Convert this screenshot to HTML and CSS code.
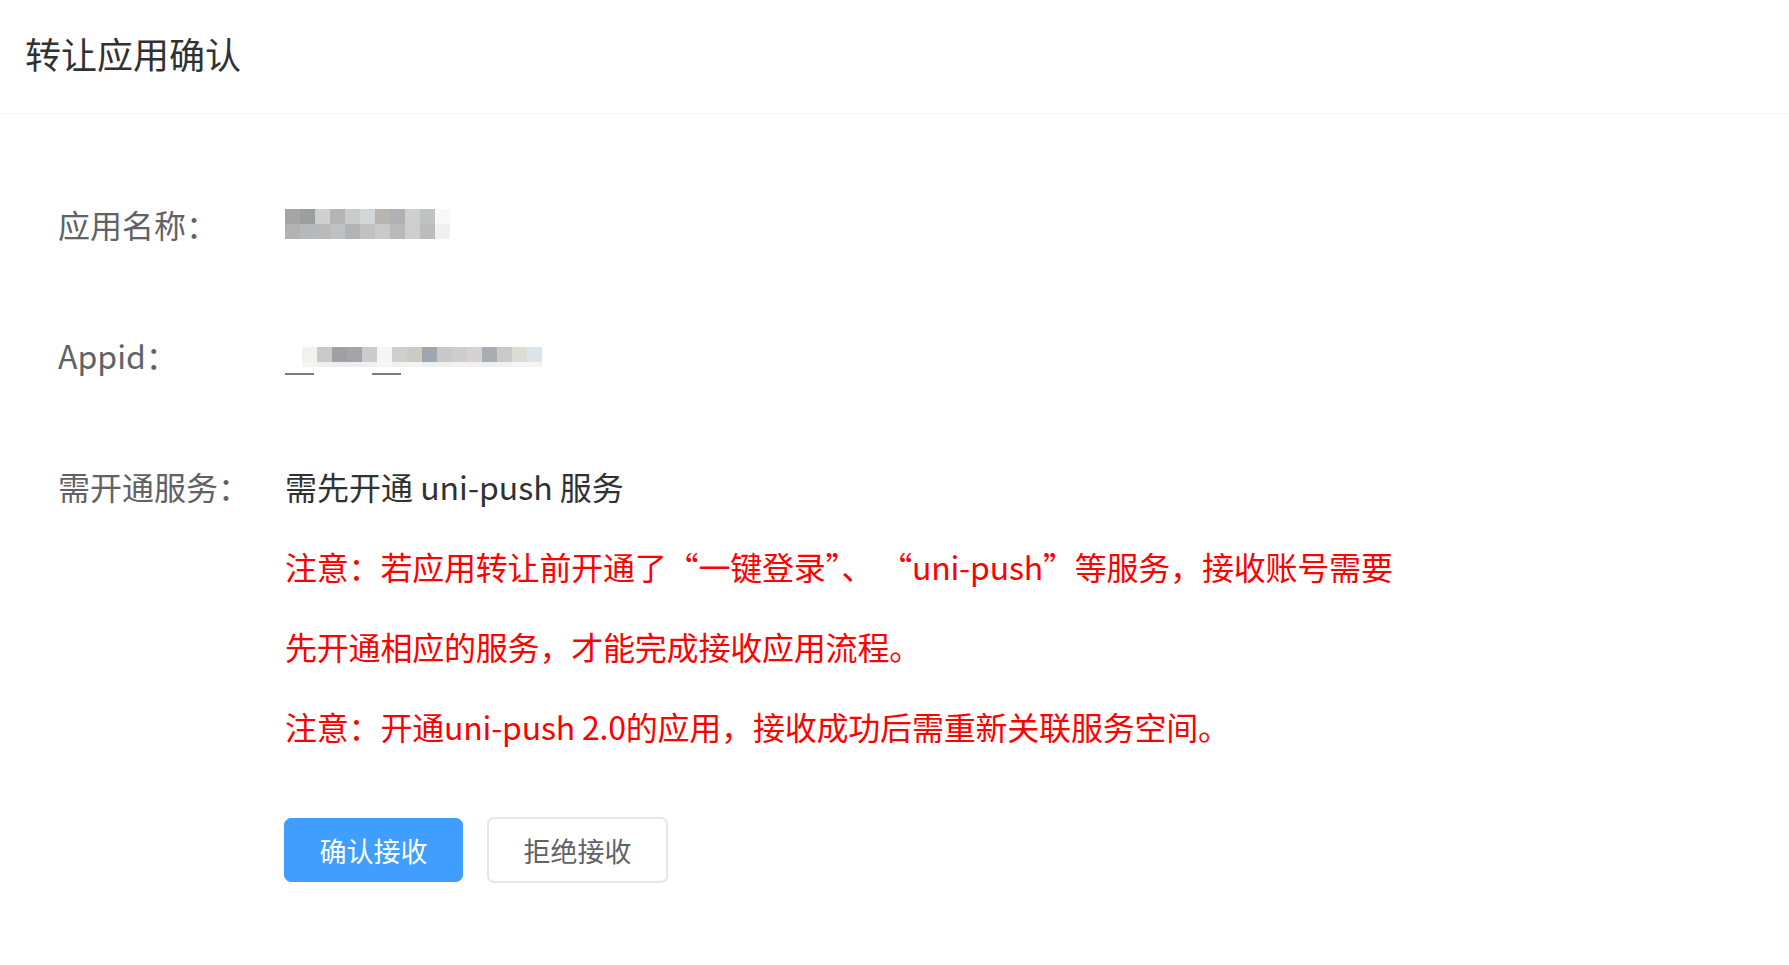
FILE: index.html
```html
<!DOCTYPE html>
<html lang="zh-CN">
<head>
  <meta charset="UTF-8">
  <meta name="viewport" content="width=device-width, initial-scale=1.0">
  <title>转让应用确认</title>
  <link rel="stylesheet" href="styles.css">
</head>
<body>

  <div class="header">
    <h2>转让应用确认</h2>
  </div>

  <div class="content">
    <div class="form-row">
      <div class="label">应用名称：</div>
      <div class="value value-blur">
        <!-- app name is pixelated in the screenshot -->
        <div class="mosaic mosaic-name">
          <span class="px-a5"></span><span class="px-9c"></span><span class="px-cf"></span><span class="px-b4"></span><span class="px-cb"></span><span class="px-d5"></span><span class="px-b6"></span><span class="px-b0"></span><span class="px-cf"></span><span class="px-c0"></span><span class="px-f8"></span>
          <span class="px-b2"></span><span class="px-b7"></span><span class="px-b9"></span><span class="px-bf"></span><span class="px-b3"></span><span class="px-c0"></span><span class="px-c9"></span><span class="px-b9"></span><span class="px-d0"></span><span class="px-bb"></span><span class="px-f0"></span>
        </div>
      </div>
    </div>

    <div class="form-row">
      <div class="label">Appid：</div>
      <div class="value value-blur">
        <div class="appid-blur">
          <div class="mosaic mosaic-id">
            <span class="px-f2"></span><span class="px-c9"></span><span class="px-9f"></span><span class="px-a4"></span><span class="px-cc"></span><span class="px-f5"></span><span class="px-cf"></span><span class="px-ca"></span><span class="px-a0"></span><span class="px-c8"></span><span class="px-cd"></span><span class="px-d4"></span><span class="px-ad"></span><span class="px-c9"></span><span class="px-da"></span><span class="px-e0"></span>
            <span class="px-f4"></span><span class="px-ef"></span><span class="px-ee"></span><span class="px-ee"></span><span class="px-f0"></span><span class="px-f6"></span><span class="px-f2"></span><span class="px-f4"></span><span class="px-ec"></span><span class="px-f0"></span><span class="px-f1"></span><span class="px-f1"></span><span class="px-ed"></span><span class="px-f0"></span><span class="px-f4"></span><span class="px-f4"></span>
          </div>
          <div class="underscores">
            <span class="us"></span><span class="us us-second"></span>
          </div>
        </div>
      </div>
    </div>

    <div class="form-row">
      <div class="label">需开通服务：</div>
      <div class="value">
        <div class="service">需先开通 uni-push 服务</div>
        <div class="notice">
          注意：若应用转让前开通了“一键登录”、 “uni-push”等服务，接收账号需要<br>
          先开通相应的服务，才能完成接收应用流程。
        </div>
        <div class="notice">注意：开通uni-push 2.0的应用，接收成功后需重新关联服务空间。</div>
      </div>
    </div>

    <div class="actions">
      <button class="btn btn-primary">确认接收</button>
      <button class="btn btn-default">拒绝接收</button>
    </div>
  </div>

</body>
</html>
```

FILE: styles.css
```css
body {
  font-family: "Noto Sans CJK SC", "Noto Sans", sans-serif;
  background-color: #fff;
  margin: 0;
  color: #303133;
}
.header {
  height: 114px;
  box-sizing: border-box;
  padding: 17px 25px 0;
  border-bottom: 1px solid #f2f2f2;
}
.header h2 {
  margin: 0;
  font-size: 36px;
  font-weight: normal;
  line-height: 72px;
  color: #303133;
}
.content {
  padding: 70px 58px 0;
}
.form-row {
  display: flex;
  align-items: flex-start;
  margin-bottom: 51px;
}
.label {
  width: 227px;
  flex-shrink: 0;
  font-size: 32px;
  line-height: 80px;
  color: #606266;
}
.value {
  font-size: 32px;
  line-height: 80px;
  color: #303133;
}
.value-blur {
  height: 80px;
  display: flex;
  align-items: center;
}
.mosaic {
  display: grid;
  grid-auto-rows: 15px;
}
.mosaic-name {
  grid-template-columns: repeat(11, 15px);
}
.mosaic-id {
  grid-template-columns: repeat(16, 15px);
  grid-template-rows: 15px 5px;
  margin-left: 17px;
  margin-top: 12px;
}
.underscores {
  display: flex;
  margin-top: 6px;
}
.us {
  width: 29px;
  height: 2px;
  background: #7a7a7a;
}
.us-second {
  margin-left: 58px;
}
.notice {
  color: #ff0000;
  letter-spacing: -0.2px;
}
.actions {
  display: flex;
  align-items: center;
  gap: 24px;
  padding-left: 226px;
}
.btn {
  font-family: inherit;
  font-size: 27px;
  padding: 0 34px;
  border-radius: 7px;
  cursor: pointer;
}
.btn-primary {
  height: 64px;
  width: 179px;
  background-color: #409eff;
  border: 1px solid #409eff;
  color: #fff;
}
.btn-default {
  height: 66px;
  width: 181px;
  background-color: #fff;
  border: 2px solid #e4e6eb;
  color: #606266;
}

.px-9c { background: #9c9e9d; }
.px-9f { background: #9f9fa4; }
.px-a0 { background: #9ea7b0; }
.px-a4 { background: #a4a4a9; }
.px-a5 { background: #a5a5a5; }
.px-ad { background: #a9adb3; }
.px-b0 { background: #b0b1b3; }
.px-b2 { background: #b2b2b2; }
.px-b3 { background: #b3b3b3; }
.px-b4 { background: #b4b4b6; }
.px-b6 { background: #b7b5b2; }
.px-b7 { background: #b5b9ba; }
.px-b9 { background: #b9b9b9; }
.px-bb { background: #bbbcbe; }
.px-bf { background: #bdc1c3; }
.px-c0 { background: #c0c1c3; }
.px-c8 { background: #c8c8c8; }
.px-c9 { background: #c9c9c9; }
.px-ca { background: #cbcbc3; }
.px-cb { background: #cbcbcb; }
.px-cc { background: #cccccc; }
.px-cd { background: #cdcdcd; }
.px-cf { background: #cfcfcf; }
.px-d0 { background: #d0cdcd; }
.px-d4 { background: #d6d2d0; }
.px-d5 { background: #d3d6d7; }
.px-da { background: #dcdbd4; }
.px-e0 { background: #dde3ea; }
.px-ec { background: #eceef0; }
.px-ed { background: #edeef0; }
.px-ee { background: #eeeeee; }
.px-ef { background: #efefef; }
.px-f0 { background: #f0f0f0; }
.px-f1 { background: #f1f1f1; }
.px-f2 { background: #f3f1ee; }
.px-f4 { background: #f4f4f4; }
.px-f5 { background: #f5f5f5; }
.px-f6 { background: #f6f6f6; }
.px-f8 { background: #f8f8f8; }
```
